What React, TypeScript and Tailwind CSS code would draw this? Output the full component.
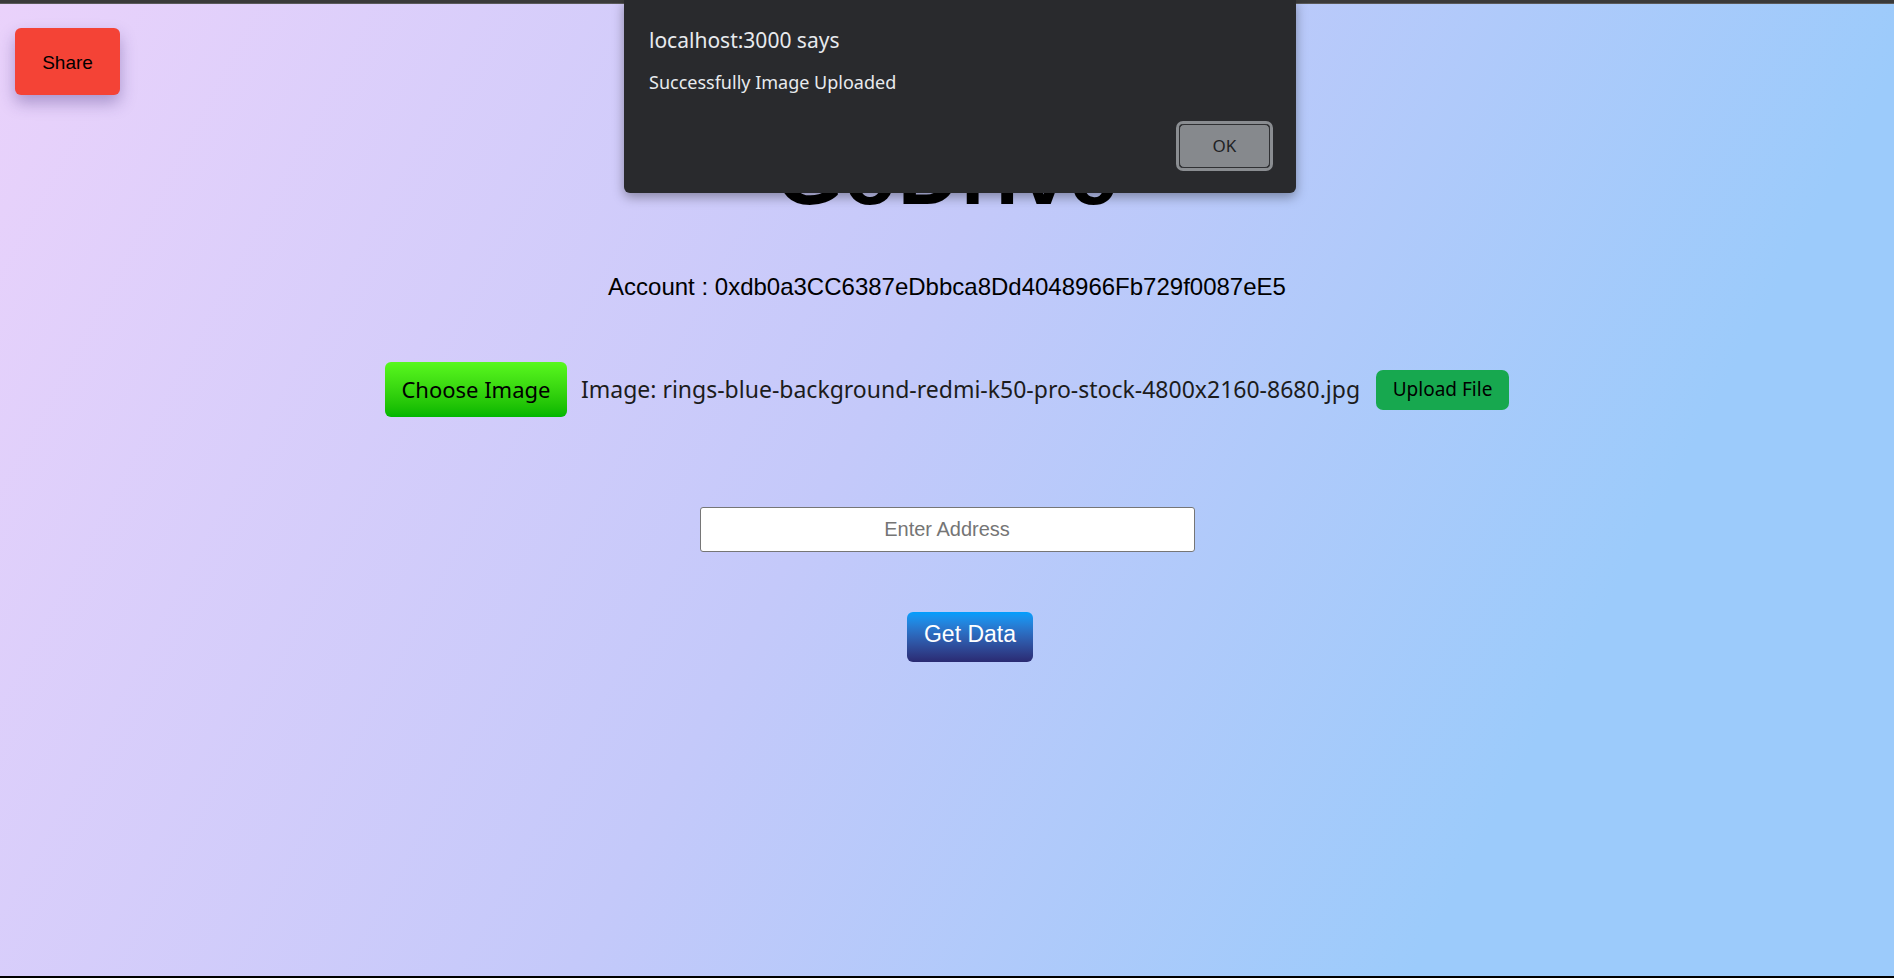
import React, { useState } from 'react';

const ui = "font-['Noto_Sans','Open_Sans',sans-serif]";
const arial = "font-['Liberation_Sans',Arial,sans-serif]";

const Dialog: React.FC = () => {
   return (
      <div className="absolute left-[624px] top-0 w-[672px] h-[193px] bg-[#292a2d] rounded-b-[6px] shadow-[0_4px_12px_rgba(0,0,0,0.35)] flex flex-col pl-[25px] pr-[23px]">
         <p className={`${ui} text-[21px] text-[#e8eaed] mt-[26px] leading-[28px]`}>
            localhost:3000 says
         </p>
         <p className={`${ui} text-[18px] text-[#e8eaed] mt-[15px] leading-[26px]`}>
            Successfully Image Uploaded
         </p>
         <div className="flex justify-end mt-auto mb-[22px]">
            <button className="w-[97px] h-[50px] rounded-[7px] border-[3px] border-[#8a8d91] p-0 bg-transparent">
               <span
                  className={`${ui} flex items-center justify-center w-full h-full rounded-[5px] border border-[#303134] bg-[#86898d] text-[17px] text-[#202124]`}
               >
                  OK
               </span>
            </button>
         </div>
      </div>
   );
};

const App: React.FC = () => {
   const [address, setAddress] = useState('');
   return (
      <div className="relative w-full h-[978px] overflow-hidden bg-[linear-gradient(118deg,#ead2fb_0%,#c4c9fa_45%,#9ccbfb_80%,#9ccbfb_100%)] flex flex-col">
         <div className="h-[4px] w-full bg-[#3a3a3a] border-b border-[#5a5a5a]" />
         <div className="flex-1 flex flex-col items-center">
            <h1 className={`${arial} text-[86px] font-bold leading-none text-black mt-[127px] tracking-[1px]`}>
               GoDrive
            </h1>
            <p className={`${arial} text-[24px] leading-[28px] text-black mt-[56px]`}>
               Account : 0xdb0a3CC6387eDbbca8Dd4048966Fb729f0087eE5
            </p>
            <div className="flex items-center gap-[14px] mt-[61px]">
               <label
                  className={`${ui} h-[55px] w-[182px] flex items-center justify-center rounded-[6px] bg-linear-to-b from-[#58f81e] to-[#00b600] text-[22px] text-black cursor-pointer`}
               >
                  Choose Image
               </label>
               <span className={`${ui} text-[23px] text-[#1c1c1c]`}>
                  Image: rings-blue-background-redmi-k50-pro-stock-4800x2160-8680.jpg
               </span>
               <button
                  className={`${ui} ml-[2px] h-[40px] w-[133px] rounded-[7px] bg-[#17a84f] text-[19px] text-black`}
               >
                  Upload File
               </button>
            </div>
            <input
               type="text"
               value={address}
               onChange={(e) => setAddress(e.target.value)}
               placeholder="Enter Address"
               className={`${arial} mt-[90px] w-[495px] h-[45px] bg-white border border-[#767676] rounded-[3px] text-center text-[20px] text-black placeholder:text-[#757575] outline-none`}
            />
            <button
               className={`${arial} mt-[60px] ml-[46px] w-[126px] h-[50px] pb-[5px] rounded-[6px] bg-linear-to-b from-[#009ffd] to-[#2a2a72] text-white text-[23px]`}
            >
               Get Data
            </button>
         </div>
         <div className="h-[2px] w-full bg-black" />
         <button
            className={`${arial} absolute left-[15px] top-[28px] w-[105px] h-[67px] pt-[3px] rounded-[6px] bg-[#f44336] text-black text-[19px] shadow-[0_8px_16px_rgba(60,40,120,0.35)]`}
         >
            Share
         </button>
         <Dialog />
      </div>
   );
};

export default App;
